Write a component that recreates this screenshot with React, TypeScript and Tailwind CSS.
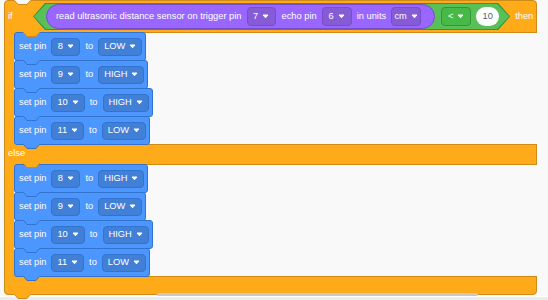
import clsx from 'clsx';

const tones = {
  blue: 'bg-[#4280d7] border-[#3373cc] h-[18px]',
  purple: 'bg-[#855cd6] border-[#774dcb] h-[19px]',
  green: 'bg-[#46b946] border-[#389438] h-[19px]',
};

const Arrow = () => (
  <svg width="7" height="5" viewBox="0 0 7 5" className="shrink-0">
    <path d="M1 1 L6 1 L3.5 3.8 Z" fill="white" stroke="white" strokeWidth="1" strokeLinejoin="round" />
  </svg>
);

const Dropdown = ({ label, tone, extra }: { label: string; tone: keyof typeof tones; extra?: string }) => (
  <div
    className={clsx(
      'flex min-w-[29px] shrink-0 items-center justify-center gap-[4px] rounded-[4px] border px-[5px] text-white',
      tones[tone],
      extra,
    )}
  >
    <span>{label}</span>
    <Arrow />
  </div>
);

// the little bump under a block that sits in the notch of the next one
const Tab = ({ fill, stroke, className }: { fill: string; stroke: string; className: string }) => (
  <svg className={clsx('absolute z-10', className)} width="17" height="6" viewBox="0 0 17 6">
    <path d="M0 0 L4 4.5 L13 4.5 L17 0 Z" fill={fill} />
    <path d="M0.5 0.5 L4 4.5 L13 4.5 L16.5 0.5" fill="none" stroke={stroke} />
  </svg>
);

const SetPin = ({ pin, level }: { pin: string; level: string }) => (
  <div className="relative -mt-px flex h-[29px] w-fit items-center gap-[5px] rounded-[3px] border border-[#3373cc] bg-[#4c97ff] pl-[4px] pr-[3px] text-white first:mt-0">
    <span>set pin</span>
    <Dropdown label={pin} tone="blue" />
    <span>to</span>
    <Dropdown label={level} tone="blue" />
    <Tab fill="#4c97ff" stroke="#3373cc" className="left-[8px] top-[27px]" />
  </div>
);

const Mouth = ({ h, rows }: { h: string; rows: [string, string][] }) => (
  <div className={clsx('flex', h)}>
    <div className="w-[9px] shrink-0" />
    <div className="-mr-px flex flex-1 flex-col rounded-l-[3px] bg-[#f9f9f9] shadow-[inset_0_1px_0_#cf8b17,inset_0_-1px_0_#cf8b17]">
      {rows.map(([p, l]) => (
        <SetPin key={p} pin={p} level={l} />
      ))}
    </div>
  </div>
);

const hex =
  '[clip-path:polygon(12px_0,calc(100%_-_12px)_0,100%_50%,calc(100%_-_12px)_100%,12px_100%,0_50%)]';

export default function App() {
  return (
    <div className="flex h-[300px] w-[548px] flex-col overflow-hidden whitespace-nowrap bg-[#f9f9f9] font-['Liberation_Sans',Arial,sans-serif] text-[9.3px] text-white">
      <div className="relative h-[296px] pl-[4px]">
        {/* if / else block */}
        <div className="relative flex w-[533px] flex-col rounded-[4px] border border-[#cf8b17] bg-[#ffab19]">
          <svg className="absolute left-[9px] top-[-1px] z-10" width="17" height="6" viewBox="0 0 17 6">
            <path d="M0 0 L4 4.5 L13 4.5 L17 0 Z" fill="#f9f9f9" />
            <path d="M0.5 0.5 L4 4.5 L13 4.5 L16.5 0.5" fill="none" stroke="#cf8b17" />
          </svg>

          <div className="flex h-[31px] items-center">
            <span className="w-[28px] shrink-0 pl-[3px]">if</span>
            <div className={clsx('relative flex h-[27px] shrink-0 items-center bg-[#389438] pl-[13px] pr-[11px]', hex)}>
              <div className={clsx('absolute inset-px bg-[#59c059]', hex)} />
              <div className="relative flex h-[25px] items-center gap-[5px] rounded-full border border-[#774dcb] bg-[#9966ff] pl-[9px] pr-[13px]">
                <span>read ultrasonic distance sensor on trigger pin</span>
                <Dropdown label="7" tone="purple" extra="min-w-[27px]" />
                <span className="ml-[1px]">echo pin</span>
                <Dropdown label="6" tone="purple" extra="min-w-[30px]" />
                <span>in units</span>
                <Dropdown label="cm" tone="purple" extra="w-[30px] px-[2px] gap-[3px]" />
              </div>
              <div className="relative ml-[6px]">
                <Dropdown label="<" tone="green" extra="min-w-[30px]" />
              </div>
              <div className="relative ml-[5px] flex h-[19px] w-[23px] items-center justify-center rounded-full bg-white text-[#575e75]">
                10
              </div>
            </div>
            <span className="ml-[5px]">then</span>
          </div>

          <Mouth
            h="h-[113px]"
            rows={[
              ['8', 'LOW'],
              ['9', 'HIGH'],
              ['10', 'HIGH'],
              ['11', 'LOW'],
            ]}
          />

          <div className="flex h-[18px] items-center pl-[3px]">else</div>

          <div className="pt-px">
            <Mouth
              h="h-[113px]"
              rows={[
                ['8', 'HIGH'],
                ['9', 'LOW'],
                ['10', 'HIGH'],
                ['11', 'LOW'],
              ]}
            />
          </div>

          <div className="h-[17px]" />

          <Tab fill="#ffab19" stroke="#cf8b17" className="left-[18px] top-[31px]" />
          <Tab fill="#ffab19" stroke="#cf8b17" className="left-[18px] top-[162px]" />
          <Tab fill="#ffab19" stroke="#cf8b17" className="left-[9px] top-[293px]" />
        </div>

        {/* horizontal scrollbar thumb */}
        <div className="absolute left-[157px] top-[293px] h-[3px] w-[321px] rounded-[2px] bg-[#c9c9c9]" />
      </div>
      <div className="h-[4px] border-t border-white bg-[#ededed]" />
    </div>
  );
}
